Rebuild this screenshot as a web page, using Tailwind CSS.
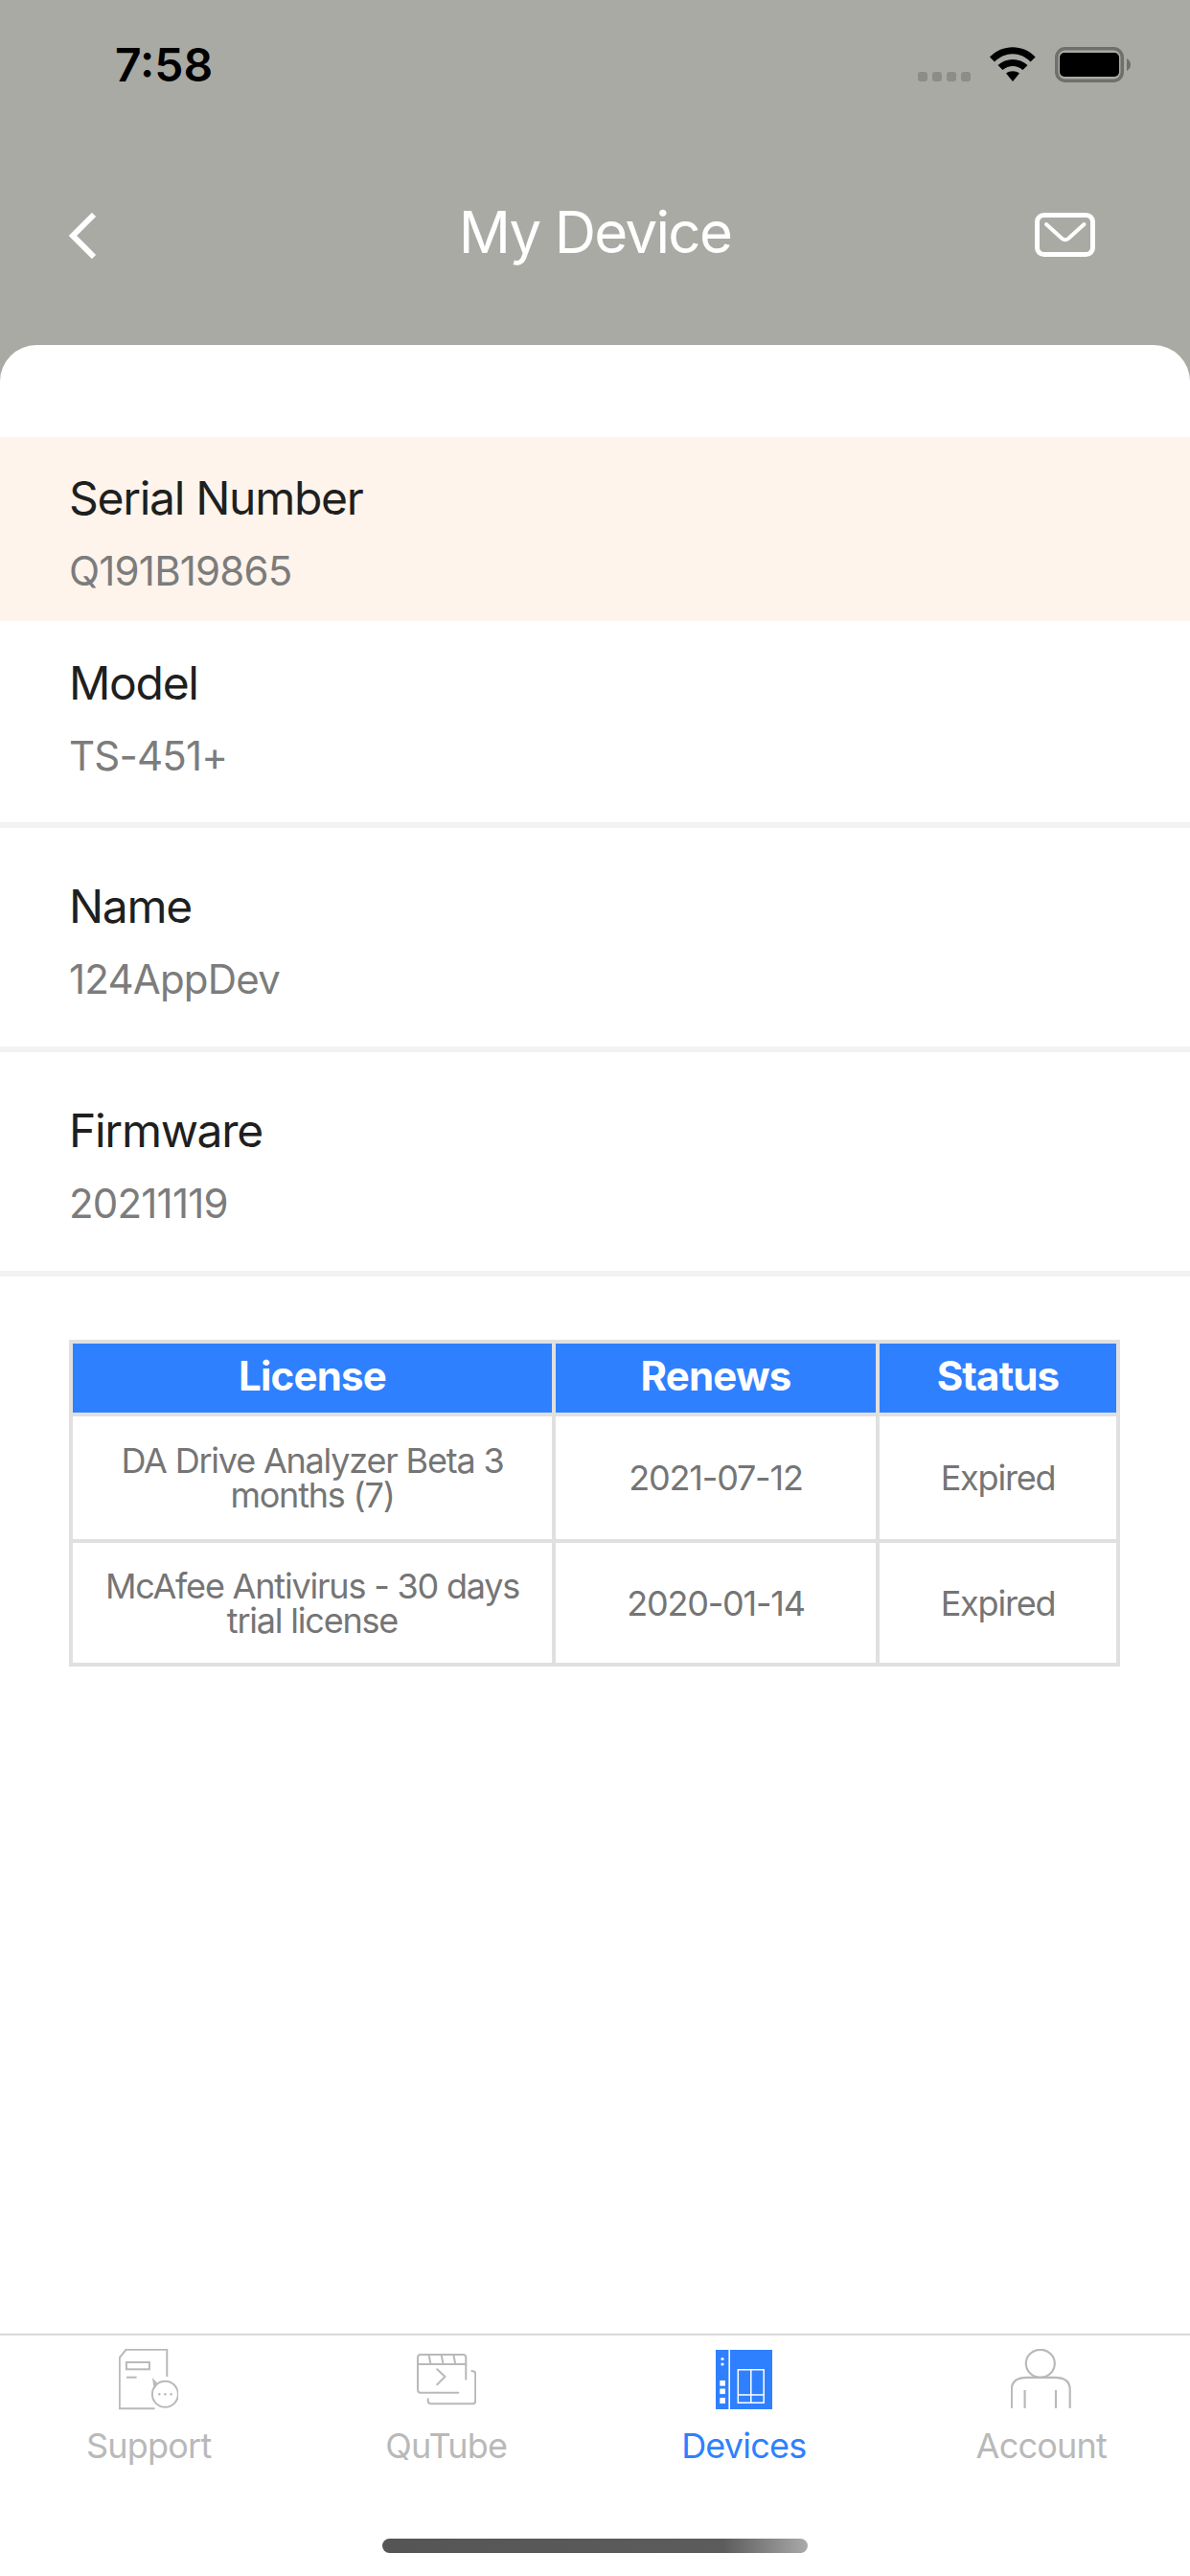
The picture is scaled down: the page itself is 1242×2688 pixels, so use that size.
<!DOCTYPE html>
<html lang="en">

<head>
  <meta charset="UTF-8">
  <meta name="viewport" content="width=device-width, initial-scale=1.0">
  <title>My Device</title>
  <script src="https://cdn.jsdelivr.net/npm/@tailwindcss/browser@4"></script>
</head>

<body class="bg-[#a9aaa4] font-['Inter',sans-serif]">
  <div class="w-[1242px] h-[2688px] flex flex-col overflow-hidden">

    <!-- Status bar -->
    <div class="h-[130px] shrink-0 flex justify-between items-start pt-[42px] pl-[120px] pr-[62px]">
      <span class="text-[48px] leading-[52px] font-semibold text-black">7:58</span>
      <div class="flex items-start">
        <div class="flex gap-[5px] mt-[33px] mr-[20px]">
          <span class="w-[10px] h-[10px] rounded-[3px] bg-[#8c8d88]"></span>
          <span class="w-[10px] h-[10px] rounded-[3px] bg-[#8c8d88]"></span>
          <span class="w-[10px] h-[10px] rounded-[3px] bg-[#8c8d88]"></span>
          <span class="w-[10px] h-[10px] rounded-[3px] bg-[#8c8d88]"></span>
        </div>
        <svg class="w-[48px] h-[37px] mt-[7px] mr-[20px]" viewBox="0 0 48 37" fill="#000">
          <path d="M0,10.5 C13,-3.3 35,-3.3 47.7,10.5 L42.5,15.5 C32,4.5 16,4.5 5,15.5 Z" />
          <path d="M8.5,19 C17,11 31,11 39.5,19 L34.5,24 C28,18.5 20,18.5 13.5,24 Z" />
          <path d="M17,27.5 C21,24.5 27,24.5 31,27.5 L24,36 Z" />
        </svg>
        <svg class="w-[79px] h-[37px] mt-[7px]" viewBox="0 0 79 37">
          <rect x="1.75" y="1.75" width="68.5" height="33.5" rx="9" fill="none" stroke="#6f706c" stroke-width="3.5" />
          <rect x="5" y="6" width="62" height="25" rx="5" fill="#000" />
          <path d="M75,12 C78,14 79,16 79,18.5 C79,21 78,23 75,25 Z" fill="#6f706c" />
        </svg>
      </div>
    </div>

    <!-- Header -->
    <div class="h-[230px] shrink-0 flex justify-between items-start pt-[92px] pl-[72px] pr-[99px] relative">
      <svg class="w-[29px] h-[48px]" viewBox="0 0 29 48" fill="none" stroke="#fff" stroke-width="6">
        <path d="M26,2 L4,24 L26,46" />
      </svg>
      <h1 class="text-[60px] leading-[72px] tracking-[-1.7px] text-white absolute left-0 right-0 top-[76px] text-center">My Device</h1>
      <svg class="w-[63px] h-[46px]" viewBox="0 0 63 46" fill="none" stroke="#fff">
        <rect x="2.5" y="2.5" width="58" height="41" rx="7" stroke-width="5" />
        <path d="M12,12 L28.5,27 Q31.7,29.5 35,27 L51.5,12" stroke-width="4" stroke-linecap="round" />
      </svg>
    </div>

    <!-- Content card -->
    <div class="flex-1 bg-white rounded-t-[38px] pt-[96px]">
      <div class="h-[192px] bg-[#fef4eb] pl-[72px] pt-[36px]">
        <div class="text-[48px] leading-[56px] tracking-[-1.3px] text-[#1f1f1f]">Serial Number</div>
        <div class="text-[42px] leading-[50px] tracking-[-0.8px] mt-[23px] text-[#7c7c7c]">Q191B19865</div>
      </div>
      <div class="h-[216px] border-b-[6px] border-[#f2f2f2] pl-[72px] pt-[37px]">
        <div class="text-[48px] leading-[56px] tracking-[-1.3px] text-[#1f1f1f]">Model</div>
        <div class="text-[42px] leading-[50px] tracking-[-0.8px] mt-[23px] text-[#7c7c7c]">TS-451+</div>
      </div>
      <div class="h-[234px] border-b-[6px] border-[#f2f2f2] pl-[72px] pt-[54px]">
        <div class="text-[48px] leading-[56px] tracking-[-1.3px] text-[#1f1f1f]">Name</div>
        <div class="text-[42px] leading-[50px] tracking-[-0.8px] mt-[23px] text-[#7c7c7c]">124AppDev</div>
      </div>
      <div class="h-[234px] border-b-[6px] border-[#f2f2f2] pl-[72px] pt-[54px]">
        <div class="text-[48px] leading-[56px] tracking-[-1.3px] text-[#1f1f1f]">Firmware</div>
        <div class="text-[42px] leading-[50px] tracking-[-0.8px] mt-[23px] text-[#7c7c7c]">20211119</div>
      </div>

      <!-- License table -->
      <div class="pl-[72px] pt-[66px]">
        <table class="table-fixed w-[1097px] border-separate border-spacing-[4px] bg-[#e0e0e0] text-center">
          <colgroup>
            <col class="w-[500px]">
            <col class="w-[334px]">
            <col class="w-[247px]">
          </colgroup>
          <thead>
            <tr class="h-[72px] bg-[#2f80fe] text-white text-[42px] leading-[50px] tracking-[-0.8px]">
              <th class="font-bold pb-[5px]">License</th>
              <th class="font-bold pb-[5px]">Renews</th>
              <th class="font-bold pb-[5px]">Status</th>
            </tr>
          </thead>
          <tbody class="text-[36px] leading-[36px] tracking-[-1.2px] text-[#757575]">
            <tr class="h-[128px] bg-white">
              <td class="px-[30px]">DA Drive Analyzer Beta 3 months (7)</td>
              <td>2021-07-12</td>
              <td>Expired</td>
            </tr>
            <tr class="h-[125px] bg-white">
              <td class="px-[30px]">McAfee Antivirus - 30 days trial license</td>
              <td>2020-01-14</td>
              <td>Expired</td>
            </tr>
          </tbody>
        </table>
      </div>
    </div>

    <!-- Tab bar -->
    <div class="h-[253px] shrink-0 bg-white border-t-2 border-[#d9d9d9] flex flex-col items-center">
      <div class="w-full grid grid-cols-4 pt-[14px]">
        <div class="flex flex-col items-center">
          <div class="h-[64px] flex items-center">
            <svg class="w-[62px] h-[64px]" viewBox="0 0 62 64" fill="none" stroke="#b9b9b9" stroke-width="2">
              <path d="M50.3,29 V0.8 H7.5 L0.8,9 V62.3 H37.6" />
              <rect x="7.9" y="14" width="24" height="7.3" />
              <path d="M7.9,29.7 H18.6" />
              <path d="M40,37 L36.4,33 L37.5,41" />
              <circle cx="48.4" cy="47.3" r="13.5" />
              <circle cx="42.3" cy="47.3" r="1.2" fill="#b9b9b9" stroke="none" />
              <circle cx="48.4" cy="47.3" r="1.2" fill="#b9b9b9" stroke="none" />
              <circle cx="54.6" cy="47.3" r="1.2" fill="#b9b9b9" stroke="none" />
            </svg>
          </div>
          <span class="text-[36px] leading-[44px] tracking-[-0.8px] mt-[15px] text-[#b9b9b9]">Support</span>
        </div>
        <div class="flex flex-col items-center">
          <div class="h-[64px] flex items-center">
            <svg class="w-[62px] h-[54px]" viewBox="0 0 62 54" fill="none" stroke="#b9b9b9" stroke-width="2" stroke-linejoin="round" stroke-linecap="round">
              <path d="M51.3,26.7 V4 Q51.3,1 48,1 H4 Q1,1 1,4 V37.5 Q1,40.7 4,40.7 H43.4" />
              <path d="M1,11 H51.3 M12.5,1 L14.5,11 M25.6,1 L27.6,11 M38.3,1 L40.3,11" />
              <path d="M21.2,16.3 L29.5,24 L21.2,32.3" />
              <path d="M57.3,18 Q61.2,18 61.2,21.5 V49 Q61.2,52.3 58,52.3 H15 Q11.7,52.3 11.7,49 V47.3" />
            </svg>
          </div>
          <span class="text-[36px] leading-[44px] tracking-[-0.8px] mt-[15px] text-[#b9b9b9]">QuTube</span>
        </div>
        <div class="flex flex-col items-center">
          <div class="h-[64px] flex items-center">
            <svg class="w-[59px] h-[64px]" viewBox="0 0 59 64">
              <rect x="0" y="1" width="13.4" height="62" fill="#2f80fe" />
              <rect x="15" y="1" width="44" height="62" fill="#2f80fe" />
              <circle cx="7" cy="10.5" r="1.6" fill="#fff" />
              <circle cx="7" cy="16" r="1.6" fill="#fff" />
              <rect x="4.3" y="33" width="5.6" height="5.6" fill="#fff" />
              <rect x="4.3" y="41.5" width="5.6" height="5.6" fill="#fff" />
              <rect x="4.3" y="51" width="5.6" height="6" fill="#fff" />
              <path d="M23.3,21.7 H50.2 V56.3 H23.3 Z M36.8,21.7 V56.3 M23.3,48 H50.2" fill="none" stroke="#fff" stroke-width="1.5" />
            </svg>
          </div>
          <span class="text-[36px] leading-[44px] tracking-[-0.8px] mt-[15px] text-[#2f80fe]">Devices</span>
        </div>
        <div class="flex flex-col items-center">
          <div class="h-[64px] flex items-center">
            <svg class="w-[63px] h-[64px]" viewBox="0 0 63 64" fill="none" stroke="#b9b9b9" stroke-width="2.2">
              <ellipse cx="30.8" cy="15.3" rx="15" ry="14.5" />
              <path d="M0.8,62 V42.3 Q0.8,29.8 17,29.8 H45.5 Q61.7,29.8 61.7,42.3 V62" />
              <path d="M14.6,43 V62 M47,43 V62" />
            </svg>
          </div>
          <span class="text-[36px] leading-[44px] tracking-[-0.8px] mt-[15px] text-[#b9b9b9]">Account</span>
        </div>
      </div>
      <div class="w-[444px] h-[15px] mt-[75px] rounded-full bg-linear-to-r from-[#555] via-[#5c5c5c] via-80% to-[#aaa]"></div>
    </div>
  </div>
</body>

</html>
